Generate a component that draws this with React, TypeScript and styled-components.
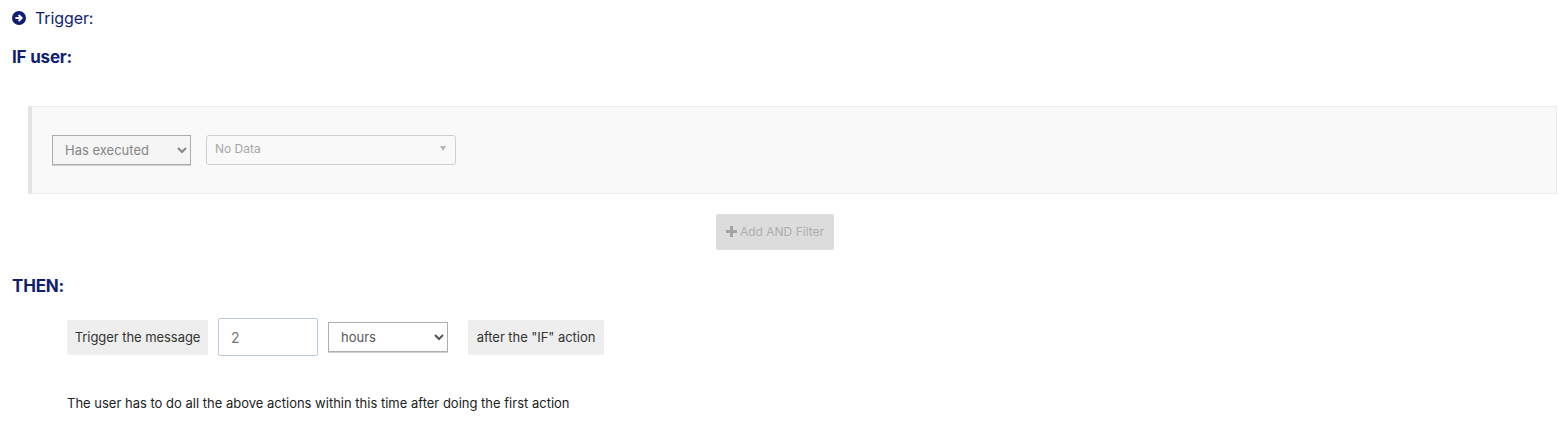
import React from "react";
import styled, { createGlobalStyle } from "styled-components";

const navy = "#101f70";

const GlobalStyle = createGlobalStyle`
  html, body {
    margin: 0;
    background: #fff;
    font-family: "Inter", "Liberation Sans", sans-serif;
  }
`;

const Page = styled.div`
  width: 1565px;
  height: 438px;
  box-sizing: border-box;
  padding: 8px 8px 0 12px;
  overflow: hidden;
`;

const TriggerRow = styled.div`
  display: flex;
  align-items: center;
  gap: 9px;
  height: 20px;
  color: ${navy};
  font-size: 16px;
  letter-spacing: -0.1px;
`;

const Heading = styled.h3<{ $top: number }>`
  margin: ${(p) => p.$top}px 0 0;
  color: ${navy};
  font-size: 17px;
  font-weight: 700;
  line-height: 20px;
  letter-spacing: -0.2px;
`;

const FilterPanel = styled.div`
  box-sizing: border-box;
  display: flex;
  align-items: flex-start;
  gap: 15px;
  height: 88px;
  margin: 39px 0 0 16px;
  padding: 28px 20px 0;
  background: #f9f9f9;
  border: 1px solid #ebebeb;
  border-left: 4px solid #e3e3e3;
`;

const NativeSelect = styled.select<{ $width: number; $muted?: boolean }>`
  box-sizing: border-box;
  width: ${(p) => p.$width}px;
  height: 30px;
  padding: 0 8px;
  border: 1px solid #adadad;
  border-radius: 0;
  box-shadow: 0 1px 0 #d0d0d0;
  background: ${(p) => (p.$muted ? "#f5f5f5" : "#fff")};
  color: ${(p) => (p.$muted ? "#858585" : "#555")};
  font-family: inherit;
  font-size: 13px;
`;

const DataPicker = styled.div`
  box-sizing: border-box;
  display: flex;
  align-items: center;
  justify-content: space-between;
  width: 250px;
  height: 30px;
  padding: 0 9px 4px 8px;
  background: #f9f9f9;
  border: 1px solid #cfcfcf;
  border-radius: 3px;
  color: #a8a8a8;
  font-size: 12px;
`;

const Caret = styled.span`
  width: 0;
  height: 0;
  border-left: 3.5px solid transparent;
  border-right: 3.5px solid transparent;
  border-top: 5px solid #b5b5b5;
`;

const ButtonRow = styled.div`
  display: flex;
  justify-content: center;
  margin-top: 20px;
  padding-right: 19px;
`;

const AddButton = styled.button`
  display: flex;
  align-items: center;
  justify-content: center;
  gap: 3px;
  width: 118px;
  height: 36px;
  padding: 0 0 1px;
  background: #dcdcdc;
  border: 0;
  border-radius: 2px;
  color: #aeaeae;
  font-family: inherit;
  font-size: 12px;
  font-weight: 400;
`;

const ThenRow = styled.div`
  display: flex;
  align-items: center;
  gap: 10px;
  height: 38px;
  margin: 22px 0 0 55px;
`;

const Addon = styled.div<{ $width: number; $gapLeft?: number }>`
  display: flex;
  align-items: center;
  justify-content: center;
  width: ${(p) => p.$width}px;
  height: 35px;
  margin-left: ${(p) => p.$gapLeft ?? 0}px;
  background: #eee;
  border-radius: 2px;
  color: #333;
  font-size: 13px;
  letter-spacing: -0.05px;
`;

const NumberInput = styled.input`
  box-sizing: border-box;
  width: 100px;
  height: 38px;
  padding: 0 12px;
  border: 1px solid #bccbdc;
  border-radius: 2px;
  color: #777;
  font-family: inherit;
  font-size: 14px;
  outline: none;
`;

const HelperText = styled.p`
  margin: 38px 0 0 55px;
  color: #222;
  font-size: 13px;
  line-height: 18px;
`;

export default function App() {
  return (
    <>
      <GlobalStyle />
      <Page>
        <TriggerRow>
          <svg width="14" height="14" viewBox="0 0 14 14">
            <circle cx="7" cy="7" r="7" fill={navy} />
            <path d="M3.4 7h6M6.6 4l3 3-3 3" fill="none" stroke="#fff" strokeWidth="2" />
          </svg>
          Trigger:
        </TriggerRow>
        <Heading $top={19}>IF user:</Heading>
        <FilterPanel>
          <NativeSelect $width={139} $muted defaultValue="Has executed">
            <option>Has executed</option>
          </NativeSelect>
          <DataPicker>
            No Data
            <Caret />
          </DataPicker>
        </FilterPanel>
        <ButtonRow>
          <AddButton>
            <svg width="11" height="11" viewBox="0 0 11 11">
              <path d="M4 0h3v4h4v3H7v4H4V7H0V4h4z" fill="#a3a3a3" />
            </svg>
            Add AND Filter
          </AddButton>
        </ButtonRow>
        <Heading $top={26}>THEN:</Heading>
        <ThenRow>
          <Addon $width={141}>Trigger the message</Addon>
          <NumberInput defaultValue="2" />
          <NativeSelect $width={120} defaultValue="hours">
            <option>hours</option>
          </NativeSelect>
          <Addon $width={136} $gapLeft={10}>after the "IF" action</Addon>
        </ThenRow>
        <HelperText>The user has to do all the above actions within this time after doing the first action</HelperText>
      </Page>
    </>
  );
}
